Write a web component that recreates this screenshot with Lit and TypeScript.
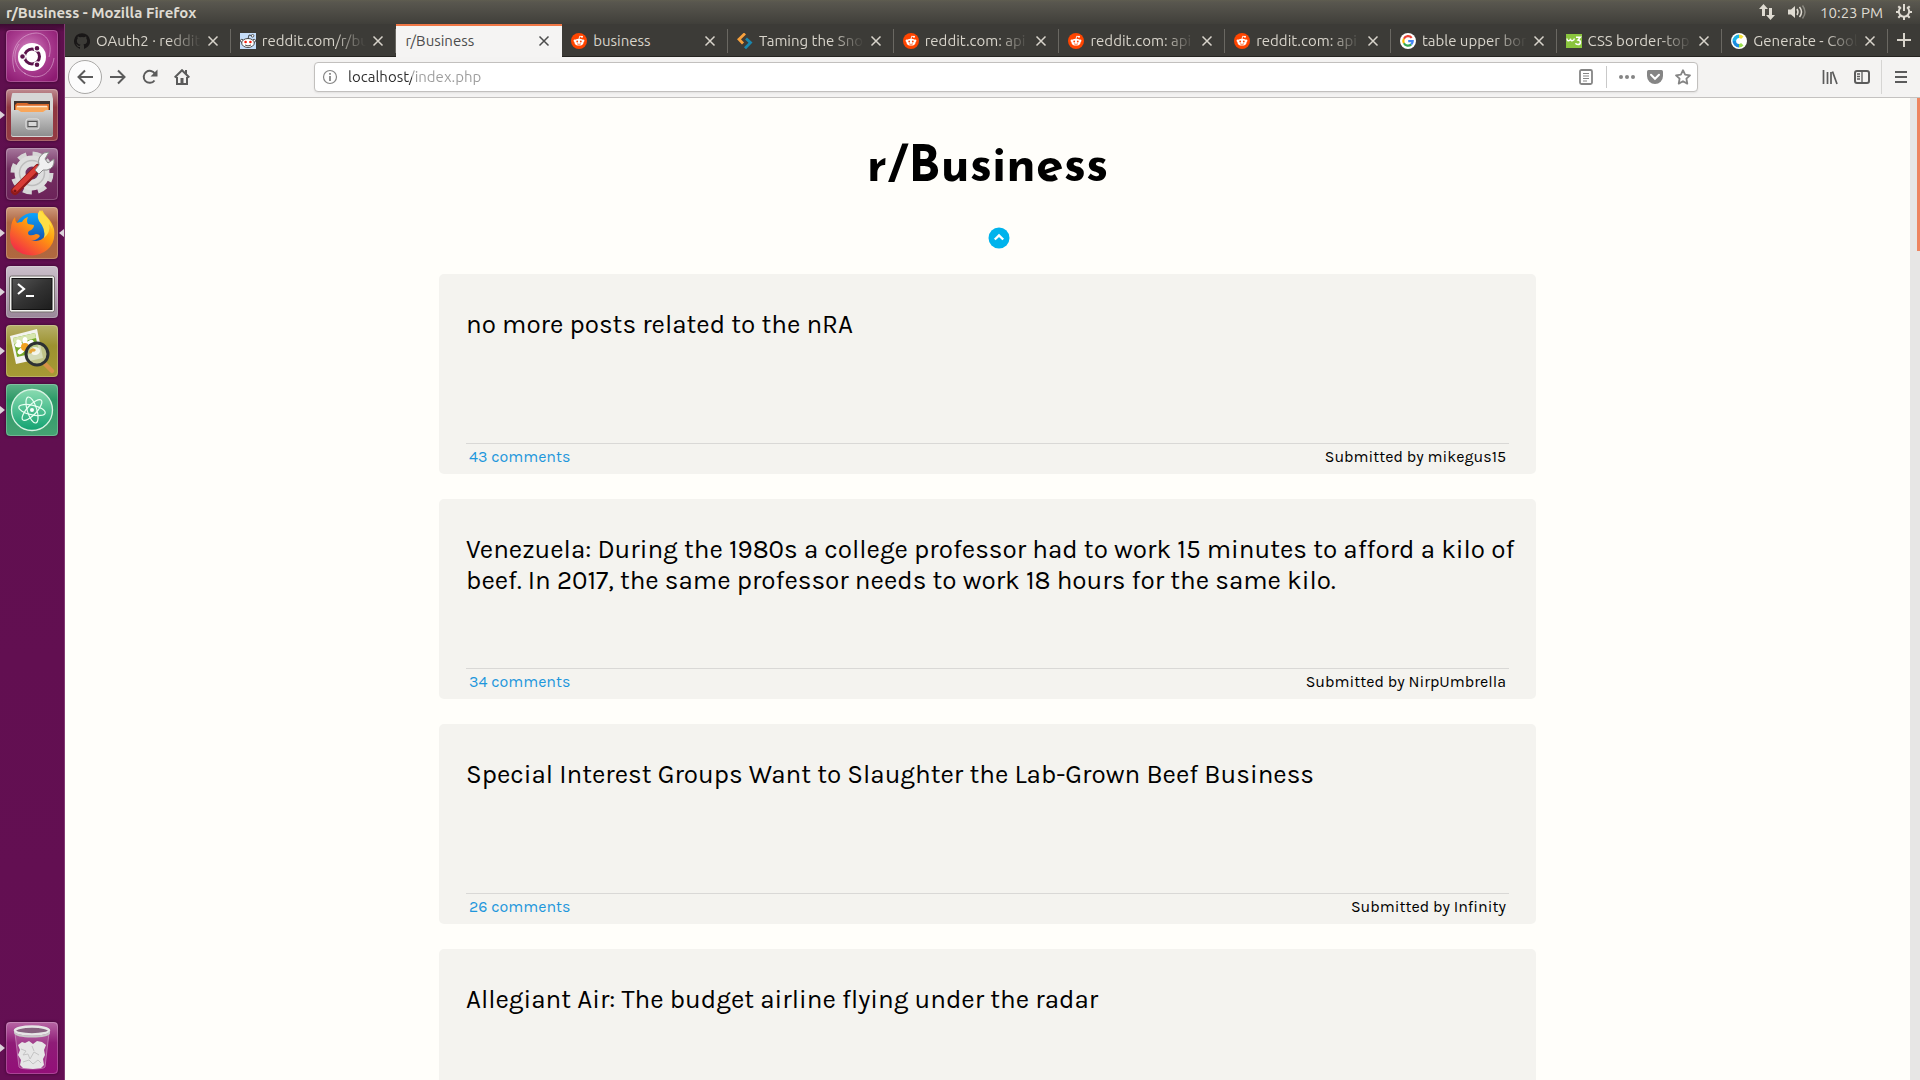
import { LitElement, html, css, svg, nothing, type TemplateResult } from "lit";
import { customElement, property } from "lit/decorators.js";
import { classMap } from "lit/directives/class-map.js";

interface Tab {
  title: string;
  icon?: string;
  active?: boolean;
  faded?: boolean;
}

interface Post {
  title: string;
  comments?: number;
  author?: string;
}

const tabs: Tab[] = [
  { title: "OAuth2 · reddit", icon: "github", faded: true },
  { title: "reddit.com/r/bu", icon: "snoo", faded: true },
  { title: "r/Business", active: true },
  { title: "business", icon: "reddit" },
  { title: "Taming the Sno", icon: "angles", faded: true },
  { title: "reddit.com: api", icon: "reddit", faded: true },
  { title: "reddit.com: api", icon: "reddit", faded: true },
  { title: "reddit.com: api", icon: "reddit", faded: true },
  { title: "table upper bor", icon: "google", faded: true },
  { title: "CSS border-top", icon: "w3", faded: true },
  { title: "Generate - Cool", icon: "coolors", faded: true },
];

const posts: Post[] = [
  { title: "no more posts related to the nRA", comments: 43, author: "mikegus15" },
  {
    title:
      "Venezuela: During the 1980s a college professor had to work 15 minutes to afford a kilo of beef. In 2017, the same professor needs to work 18 hours for the same kilo.",
    comments: 34,
    author: "NirpUmbrella",
  },
  {
    title: "Special Interest Groups Want to Slaughter the Lab-Grown Beef Business",
    comments: 26,
    author: "Infinity",
  },
  { title: "Allegiant Air: The budget airline flying under the radar" },
];

const favicons: Record<string, TemplateResult> = {
  github: svg`<path fill="#191717" d="M8 .2a8 8 0 0 0-2.5 15.6c.4.1.5-.2.5-.4v-1.5c-2.2.5-2.7-1-2.7-1-.4-.9-.9-1.200-.9-1.200-.7-.5.1-.5.1-.5.8.1 1.200.8 1.200.8.7 1.200 1.900.9 2.300.7.1-.5.3-.9.5-1.100-1.800-.2-3.600-.9-3.600-4 0-.9.3-1.600.8-2.100-.1-.2-.4-1 .1-2.100 0 0 .7-.2 2.200.8a7.500 7.500 0 0 1 4 0c1.500-1 2.200-.8 2.200-.8.4 1.100.1 1.900.1 2.100.5.6.8 1.300.8 2.100 0 3.100-1.900 3.700-3.700 3.900.3.300.6.8.6 1.500v2.400c0 .2.1.5.600.4A8 8 0 0 0 8 .2z"/>`,
  snoo: svg`<rect width="16" height="16" fill="#c6defa"/><path d="M8 6l1-4 3 .6" fill="none" stroke="#222" stroke-width=".8"/><circle cx="12.600" cy="2.800" r="1.300" fill="#fff" stroke="#222" stroke-width=".7"/><circle cx="1.900" cy="7.800" r="1.500" fill="#fff" stroke="#222" stroke-width=".7"/><circle cx="14.100" cy="7.800" r="1.500" fill="#fff" stroke="#222" stroke-width=".7"/><ellipse cx="8" cy="10" rx="6.300" ry="4.500" fill="#fff" stroke="#222" stroke-width=".8"/><circle cx="5.600" cy="9" r="1.300" fill="#f31c0c"/><circle cx="10.400" cy="9" r="1.300" fill="#f31c0c"/><path d="M5 12q3 1.800 6 0" fill="none" stroke="#222" stroke-width=".8"/>`,
  reddit: svg`<circle cx="8" cy="8" r="8" fill="#ff4500"/><path d="M8 6l.7-2.800 2.300.500" fill="none" stroke="#fff" stroke-width=".9"/><circle cx="11" cy="3.800" r="1" fill="#fff"/><circle cx="3.800" cy="7.700" r="1.200" fill="#fff"/><circle cx="12.200" cy="7.700" r="1.200" fill="#fff"/><ellipse cx="8" cy="9.200" rx="4.500" ry="3.400" fill="#fff"/><circle cx="6.200" cy="8.500" r=".9" fill="#ff4500"/><circle cx="9.800" cy="8.500" r=".9" fill="#ff4500"/><path d="M6 10.800q2 1.200 4 0" fill="none" stroke="#ff4500" stroke-width=".7"/>`,
  angles: svg`<path d="M8 .5L2 6.300 6 10.500" fill="none" stroke="#f8a13c" stroke-width="2.800"/><path d="M9 5.500L13.500 9.600 8 15.300" fill="none" stroke="#1a87ae" stroke-width="2.800"/>`,
  google: svg`<circle cx="8" cy="8" r="8" fill="#fff"/><g fill="none" stroke-width="2.200"><path d="M11.700 4.900A4.700 4.700 0 0 0 3.900 5.700" stroke="#ea4335"/><path d="M3.900 5.700a4.700 4.700 0 0 0 0 4.600" stroke="#fbbc05"/><path d="M3.900 10.300a4.700 4.700 0 0 0 7.300 1.100" stroke="#34a853"/><path d="M11.200 11.400A4.700 4.700 0 0 0 12.700 8.100H8.200" stroke="#4285f4"/></g>`,
  w3: svg`<rect y="1" width="16" height="14" fill="#8ac53e"/><path d="M1 5.500q.2 2.800 2.200 2.200 1.500-.5 1.200-2 .5 2.600 2.200 2 1.700-.5 1.700-2.200" fill="none" stroke="#fff" stroke-width="1.400"/><path d="M10 4.200h4.300L12 7c3.500.3 3 4.500 0 4.500q-2 0-2.500-1.300" fill="none" stroke="#fff" stroke-width="1.500"/>`,
  coolors: svg`<circle cx="8" cy="8" r="8" fill="#fff"/><g fill="none" stroke-width="3.600"><path d="M8 3.300a4.700 4.700 0 0 1 3.300 1.400" stroke="#f5e23c"/><path d="M8 3.300A4.700 4.700 0 0 0 3.300 8" stroke="#1fb5e9"/><path d="M3.300 8A4.700 4.700 0 0 0 8 12.700" stroke="#1b8de0"/><path d="M8 12.700a4.700 4.700 0 0 0 3.300-1.400" stroke="#9be04d"/></g>`,
};

const launcherArt: Record<string, TemplateResult> = {
  ubuntu: svg`<defs><radialGradient id="u" cx=".45" cy=".4" r=".7"><stop offset="0" stop-color="#d68bc4"/><stop offset=".55" stop-color="#a83b8e"/><stop offset="1" stop-color="#8d1b72"/></radialGradient></defs><rect width="52" height="52" rx="4" fill="url(#u)"/><g fill="none" stroke="#e3b4d8" stroke-opacity=".6"><path d="M9 42C2 22 12 4 30 3c10 0 17 10 13 24"/><path d="M20 44C8 38 6 24 13 14"/><path d="M18 43c14 9 28 1 30-15"/></g><circle cx="26" cy="27" r="14" fill="#fff"/><circle cx="26" cy="26.500" r="7.500" fill="none" stroke="#5b134b" stroke-width="3"/><g fill="#5b134b" stroke="#fff" stroke-width="1.200"><circle cx="16.500" cy="26.500" r="2.900"/><circle cx="31" cy="18.300" r="2.900"/><circle cx="31" cy="34.700" r="2.900"/></g>`,
  files: svg`<defs><linearGradient id="t" x2="0" y2="1"><stop offset="0" stop-color="#c08d92"/><stop offset=".35" stop-color="#8f3640"/><stop offset="1" stop-color="#943b43"/></linearGradient><linearGradient id="f" x2="0" y2="1"><stop offset="0" stop-color="#d0d0d0"/><stop offset="1" stop-color="#8e8e8e"/></linearGradient></defs><rect width="52" height="52" rx="4" fill="url(#t)"/><path d="M6 5q0-1 1-1h38q1 0 1 1l1 5v36q0 2-2 2H7q-2 0-2-2V10z" fill="#d6d6d6"/><path d="M8 12h36v12H8z" fill="#3f3330"/><path d="M9 16l2-2h10l2 1h20v9H9z" fill="#d9682a"/><path d="M10 17h32v7H10z" fill="#f9a65a"/><path d="M11 17.500h30" stroke="#ffe7cf" stroke-width="1.500"/><path d="M7 21h5l3 2h22l3-2h5q2 0 2 2v22q0 2-2 2H7q-2 0-2-2V23q0-2 2-2z" fill="url(#f)"/><rect x="20" y="30" width="13" height="10" rx="2" fill="#a9a9a9" stroke="#e6e6e6"/><rect x="22" y="32.500" width="9" height="5" fill="#d8d8d8" stroke="#555"/>`,
  settings: svg`<defs><linearGradient id="s" x2="0" y2="1"><stop offset="0" stop-color="#a7789d"/><stop offset=".4" stop-color="#733061"/><stop offset="1" stop-color="#6c2259"/></linearGradient></defs><rect width="52" height="52" rx="4" fill="url(#s)"/><circle cx="26" cy="25" r="18.500" fill="none" stroke="#d6d6d6" stroke-width="6" stroke-dasharray="8.500 6.030"/><circle cx="26" cy="25" r="12" fill="none" stroke="#dedede" stroke-width="11"/><circle cx="26" cy="25" r="12.500" fill="none" stroke="#bdbdbd" stroke-width="1.500"/><path d="M9 43L32 20" stroke="#8f1a1a" stroke-width="8" stroke-linecap="round"/><path d="M9 42L31 20" stroke="#d83c36" stroke-width="5" stroke-linecap="round"/><path d="M29 22l4-5q-2-8 5-12l5-1-4 7 3 4 6-4q1 9-7 11l-4 0-4 4z" fill="#f0f0f0" stroke="#8c8c8c"/><circle cx="9" cy="43" r="1.600" fill="#7a1414"/>`,
  firefox: svg`<defs><linearGradient id="x" x2="0" y2="1"><stop offset="0" stop-color="#cf9b7c"/><stop offset=".3" stop-color="#ad6542"/><stop offset="1" stop-color="#b0683f"/></linearGradient><linearGradient id="y" x1=".9" y1="0" x2=".2" y2="1"><stop offset="0" stop-color="#ffe93b"/><stop offset=".45" stop-color="#ff980e"/><stop offset="1" stop-color="#f2254b"/></linearGradient><linearGradient id="z" x2="0" y2="1"><stop offset="0" stop-color="#0aa5ff"/><stop offset="1" stop-color="#1a3a98"/></linearGradient></defs><rect width="52" height="52" rx="4" fill="url(#x)"/><circle cx="27" cy="24" r="18" fill="url(#z)"/><path d="M9 10q0 4 2 6 2-1 5-1 2-4 6-5-2 4 0 7l6 1q0 4-5 6-2 2 0 4 3 1 7-1 3 0 4 2-3 5-9 4 9 3 14-4 3-6-1-11-4-5-5-8 1-5 3-7 2 4 5 7 5 5 7 12 2 14-7 21-9 7-19 5Q9 46 5 36 3 27 5 21q0-6 4-11z" fill="url(#y)"/><path d="M34 3q-4 5-1 11 7 8 5 17 7-6 5-14 2 2 3 5-1-9-8-14-3-3-4-5z" fill="#ffde45"/>`,
  terminal: svg`<defs><linearGradient id="m" x2="0" y2="1"><stop offset="0" stop-color="#cbbfca"/><stop offset="1" stop-color="#9a8799"/></linearGradient><linearGradient id="n" x2="1" y2="1"><stop offset="0" stop-color="#555"/><stop offset=".5" stop-color="#333"/><stop offset="1" stop-color="#1d1d1d"/></linearGradient></defs><rect width="52" height="52" rx="4" fill="url(#m)"/><rect x="3.500" y="10" width="45" height="36" rx="2" fill="#f1f1ee" stroke="#77706f"/><rect x="6" y="12.500" width="40" height="31" fill="url(#n)" stroke="#111"/><path d="M12 18l6 5-6 5M20 30h8" fill="none" stroke="#fff" stroke-width="2.200"/>`,
  viewer: svg`<defs><linearGradient id="i" x2="0" y2="1"><stop offset="0" stop-color="#b7b06a"/><stop offset=".4" stop-color="#9c922f"/><stop offset="1" stop-color="#a79a35"/></linearGradient></defs><rect width="52" height="52" rx="4" fill="url(#i)"/><path d="M4 11L31 4l6 29-27 6z" fill="#f3f3ee"/><path d="M7 13l22-5 4 19-22 5z" fill="#76a829"/><path d="M7 13l22-5 1 5-22 6z" fill="#d7e6ae"/><g fill="#fff"><ellipse cx="19" cy="16" rx="2.500" ry="4"/><ellipse cx="13" cy="20" rx="4" ry="2.500"/><ellipse cx="15" cy="26" rx="4" ry="2.500" transform="rotate(-40 15 26)"/><ellipse cx="24" cy="18" rx="4" ry="2.500" transform="rotate(-30 24 18)"/><ellipse cx="13" cy="17" rx="3" ry="2" transform="rotate(35 13 17)"/></g><circle cx="19" cy="22" r="4" fill="#f1a322"/><path d="M38 38l8 8" stroke="#d69148" stroke-width="4.500" stroke-linecap="round"/><circle cx="31" cy="29" r="11" fill="#c9d3a6" fill-opacity=".75" stroke="#2d3133" stroke-width="3"/><ellipse cx="29" cy="26" rx="5" ry="4" fill="#fff" fill-opacity=".8"/><path d="M24 28q2-5 5-2" stroke="#e5a63a" stroke-width="3" fill="none"/>`,
  atom: svg`<defs><linearGradient id="a" x2="0" y2="1"><stop offset="0" stop-color="#5eb087"/><stop offset=".3" stop-color="#2d9a68"/><stop offset="1" stop-color="#46a273"/></linearGradient><linearGradient id="b" x2="0" y2="1"><stop offset="0" stop-color="#8adbb0"/><stop offset="1" stop-color="#12a271"/></linearGradient></defs><rect width="52" height="52" rx="4" fill="url(#a)"/><circle cx="26" cy="26" r="20.500" fill="url(#b)" stroke="#d8f3e3" stroke-width="1.300"/><g fill="none" stroke="#e9fff2" stroke-width="1.200"><ellipse cx="26" cy="26" rx="13.500" ry="4.800" transform="rotate(13 26 26)"/><ellipse cx="26" cy="26" rx="13.500" ry="4.800" transform="rotate(73 26 26)"/><ellipse cx="26" cy="26" rx="13.500" ry="4.800" transform="rotate(-47 26 26)"/></g><circle cx="26" cy="26" r="2" fill="#fff"/>`,
  trash: svg`<defs><linearGradient id="r" x2="0" y2="1"><stop offset="0" stop-color="#b766a4"/><stop offset=".4" stop-color="#8f1c77"/><stop offset="1" stop-color="#930f78"/></linearGradient></defs><rect width="52" height="52" rx="4" fill="url(#r)"/><path d="M9 11h34l-4 34q-1 2-13 2t-13-2z" fill="#e9c7e1" fill-opacity=".2" stroke="#e0b9d7" stroke-opacity=".5"/><path d="M12 23l4-3 3 1 4-2 4 3 4-3 5 1 4 3-2 5 1 5-2 4 1 6-3 3-8 1-10-1-3-3 1-5-3-5 2-5z" fill="#e6e6e6"/><path d="M15 27l5 2-3 4 5-1 2 5 4-7 5 3M17 40l6-2 4 4 5-4 3 3M26 24l2 5" fill="none" stroke="#c4c4c4"/><ellipse cx="26" cy="8.500" rx="17" ry="4" fill="#86627f" stroke="#e6e6e6" stroke-width="2.500"/><path d="M8 8.500q1 5 18 5t18-5v3q-2 4-18 4T8 11z" fill="#c9c9c9"/>`,
};

@customElement("launcher-item")
export class LauncherItem extends LitElement {
  @property() name = "";
  @property() label = "";
  @property({ type: Boolean }) running = false;
  @property({ type: Boolean }) focused = false;

  static styles = css`
    :host {
      display: flex;
      align-items: center;
      justify-content: space-between;
      height: 52px;
    }
    .mark {
      width: 5px;
      height: 10px;
      fill: #dcd3da;
      visibility: hidden;
    }
    .on {
      visibility: visible;
    }
    button {
      width: 52px;
      height: 52px;
      padding: 0;
      border: 0;
      background: none;
      border-radius: 4px;
      box-shadow: 0 0 3px rgba(30, 0, 25, 0.7);
    }
    .art {
      display: block;
      width: 52px;
      height: 52px;
    }
    .edge {
      fill: none;
      stroke: #fff;
      stroke-opacity: 0.22;
    }
  `;

  render() {
    return html`
      <svg class=${classMap({ mark: true, on: this.running })} viewBox="0 0 5 10"><path d="M0 1l5 4-5 4z" /></svg>
      <button aria-label=${this.label}>
        <svg class="art" viewBox="0 0 52 52">
          ${launcherArt[this.name]}
          <rect class="edge" x=".5" y=".5" width="51" height="51" rx="4" />
        </svg>
      </button>
      <svg class=${classMap({ mark: true, on: this.focused })} viewBox="0 0 5 10"><path d="M5 1L0 5l5 4z" /></svg>
    `;
  }
}

@customElement("browser-tab")
export class BrowserTab extends LitElement {
  @property({ attribute: false }) tab!: Tab;

  static styles = css`
    :host {
      display: block;
      flex: 1 1 0;
      min-width: 0;
    }
    .tab {
      box-sizing: border-box;
      display: flex;
      align-items: center;
      gap: 6px;
      height: 33px;
      padding: 2px 12px 0 9px;
      color: #d8d4cb;
      border-bottom: 1px solid #252420;
      background: linear-gradient(#6a6862, #6a6862) right 5px / 1px 24px no-repeat;
    }
    .active {
      color: #4c4c4c;
      background: #f5f4f3;
      border-top: 2px solid #f07746;
      border-bottom: 0;
      padding-top: 0;
      padding-bottom: 1px;
    }
    .icon {
      flex: none;
      width: 16px;
      height: 16px;
    }
    .label {
      flex: 1;
      min-width: 0;
      white-space: nowrap;
      line-height: 20px;
    }
    .faded {
      mask-image: linear-gradient(to left, transparent, #000 32px);
    }
    button {
      flex: none;
      width: 12px;
      height: 12px;
      padding: 0;
      border: 0;
      color: inherit;
      background: none;
    }
    .close {
      display: block;
      fill: none;
      stroke: currentColor;
      stroke-width: 1.500;
    }
  `;

  render() {
    const { title, icon, active, faded } = this.tab;
    return html`
      <div class=${classMap({ tab: true, active: !!active })}>
        ${icon ? html`<svg class="icon" viewBox="0 0 16 16">${favicons[icon]}</svg>` : nothing}
        <span class=${classMap({ label: true, faded: !!faded })}>${title}</span>
        <button aria-label="Close tab">
          <svg class="close" viewBox="0 0 12 12"><path d="M1.500 1.500l9 9m0-9l-9 9" /></svg>
        </button>
      </div>
    `;
  }
}

@customElement("post-card")
export class PostCard extends LitElement {
  @property({ attribute: false }) post!: Post;

  static styles = css`
    :host {
      display: block;
    }
    .card {
      box-sizing: border-box;
      display: flex;
      flex-direction: column;
      min-height: 200px;
      padding: 35px 0 4px 27px;
      border-radius: 5px;
      background: #f4f3ef;
    }
    .title {
      flex: 1;
      margin: 0;
      padding-right: 8px;
      font-size: 26px;
      line-height: 31px;
      font-weight: 400;
    }
    .meta {
      display: flex;
      justify-content: space-between;
      margin-right: 27px;
      padding: 0 3px;
      border-top: 1px solid #d9d8d6;
      font-size: 16px;
      line-height: 26px;
    }
    a {
      color: #1e97dc;
      text-decoration: none;
    }
  `;

  render() {
    const { title, comments, author } = this.post;
    return html`
      <article class="card">
        <h2 class="title">${title}</h2>
        ${author
          ? html`<div class="meta"><a href="#comments">${comments} comments</a><span>Submitted by ${author}</span></div>`
          : nothing}
      </article>
    `;
  }
}

@customElement("app-root")
export class AppRoot extends LitElement {
  static styles = css`
    :host {
      display: flex;
      flex-direction: column;
      height: 100vh;
      overflow: hidden;
      font-family: Ubuntu, "Open Sans", "Noto Sans", sans-serif;
      font-size: 15px;
    }
    button {
      padding: 0;
      border: 0;
      background: none;
      color: inherit;
    }
    svg {
      display: block;
    }
    .panel {
      flex: none;
      display: flex;
      align-items: center;
      justify-content: space-between;
      height: 24px;
      padding: 0 7px 0 6px;
      color: #dfdbd2;
      background: linear-gradient(#5f5d50, #59574f 2px, #403f3a);
    }
    .window-title {
      font-weight: 700;
    }
    .status {
      display: flex;
      align-items: center;
      gap: 12px;
    }
    .body {
      flex: 1;
      min-height: 0;
      display: flex;
    }
    .launcher {
      flex: none;
      box-sizing: border-box;
      width: 65px;
      display: flex;
      flex-direction: column;
      gap: 7px;
      padding: 6px 0;
      border-right: 1px solid #833b73;
      background: linear-gradient(#3c0a31, #5f0f4e 8px, #640f53);
    }
    .bottom {
      margin-top: auto;
    }
    .browser {
      flex: 1;
      min-width: 0;
      display: flex;
      flex-direction: column;
    }
    .tabs {
      flex: none;
      display: flex;
      background: #3c3b37;
    }
    .new-tab {
      width: 32px;
      height: 33px;
      display: grid;
      place-items: center;
      color: #d8d4cb;
      border-bottom: 1px solid #252420;
    }
    .toolbar {
      flex: none;
      box-sizing: border-box;
      display: flex;
      align-items: center;
      height: 41px;
      padding: 0 3px;
      color: #5b5b5b;
      background: #f4f3f2;
      border-bottom: 1px solid #c4c2c0;
    }
    .tool {
      flex: none;
      width: 32px;
      height: 32px;
      display: grid;
      place-items: center;
    }
    .back {
      box-sizing: border-box;
      width: 34px;
      height: 34px;
      border: 1px solid #a9a8a6;
      border-radius: 50%;
      background: #fcfcfc;
    }
    .spacer {
      flex: 117 1 0;
    }
    .url {
      box-sizing: border-box;
      flex: 1382 1 0;
      display: flex;
      align-items: center;
      gap: 10px;
      height: 30px;
      padding: 0 4px 0 7px;
      border: 1px solid #c2c0be;
      border-radius: 4px;
      background: #fff;
      color: #858585;
      box-shadow: 0 1px 2px rgba(0, 0, 0, 0.08);
    }
    .address {
      flex: 1;
      min-width: 0;
      padding: 0;
      border: 0;
      outline: 0;
      font: inherit;
      line-height: 20px;
      color: transparent;
      /* Host in dark ink, path in grey. */
      background: linear-gradient(to right, #2b2b2b 64px, #9b9b9b 64px);
      background-clip: text;
    }
    .rule {
      width: 1px;
      height: 22px;
      margin-left: 2px;
      background: #c9c9c9;
    }
    .divider {
      width: 1px;
      height: 34px;
      margin: 0 3px;
      background: #d6d5d3;
    }
    .viewport {
      flex: 1;
      min-height: 0;
      display: flex;
      background: #fffefa;
    }
    .page {
      flex: 1;
      min-width: 0;
      overflow: hidden;
      color: #000;
      font-family: Karla, Inter, "Liberation Sans", sans-serif;
    }
    .heading {
      margin: 0;
      padding-top: 39px;
      text-align: center;
      font-family: "Josefin Sans", Lato, sans-serif;
      font-size: 50px;
      line-height: 64px;
      font-weight: 700;
    }
    .up-row {
      display: flex;
      justify-content: center;
      padding: 26px 0 25px 22px;
    }
    .feed {
      display: flex;
      flex-direction: column;
      gap: 25px;
      max-width: 1097px;
      margin: 0 auto;
    }
    .track {
      flex: none;
      width: 10px;
      display: flex;
      justify-content: flex-end;
      background: #e7e6e5;
    }
    .thumb {
      width: 3px;
      height: 153px;
      background: #ee8560;
    }
    .line {
      fill: none;
      stroke: currentColor;
      stroke-width: 2;
    }
  `;

  render() {
    return html`
      <header class="panel">
        <span class="window-title">r/Business - Mozilla Firefox</span>
        <div class="status">
          <svg width="18" height="18" viewBox="0 0 18 18" fill="#dfdbd2">
            <path d="M5.500 1L10 6H7v7H4V6H1zM12.500 17L8 12h3V5h3v7h3z" />
          </svg>
          <svg width="20" height="16" viewBox="0 0 20 16">
            <path d="M0 5.500h3L7 2v12l-4-3.500H0z" fill="#dfdbd2" />
            <g fill="none" stroke="#dfdbd2" stroke-width="1.500">
              <path d="M9 5q2 3 0 6" />
              <path d="M11.500 3q4 5 0 10" />
              <path d="M14.500 1.500q5 6.500 0 13" opacity=".4" />
            </g>
          </svg>
          <span>10:23 PM</span>
          <svg width="18" height="18" viewBox="0 0 18 18" fill="none" stroke="#dfdbd2" stroke-width="2">
            <path d="M6 4.300a5.200 5.200 0 1 0 6 0M9 1v7" />
            <path d="M1 9h3m10 0h3M9 14v3M3.300 14.700l2-2m9.400 2l-2-2M3.300 3.300l2 2m9.400-2l-2 2" />
          </svg>
        </div>
      </header>
      <div class="body">
        <nav class="launcher">
          <launcher-item name="ubuntu" label="Search"></launcher-item>
          <launcher-item name="files" label="Files" running></launcher-item>
          <launcher-item name="settings" label="System Settings"></launcher-item>
          <launcher-item name="firefox" label="Firefox" running focused></launcher-item>
          <launcher-item name="terminal" label="Terminal" running></launcher-item>
          <launcher-item name="viewer" label="Image Viewer" running></launcher-item>
          <launcher-item name="atom" label="Atom" running></launcher-item>
          <launcher-item class="bottom" name="trash" label="Trash" running></launcher-item>
        </nav>
        <div class="browser">
          <div class="tabs">
            ${tabs.map((tab) => html`<browser-tab .tab=${tab}></browser-tab>`)}
            <button class="new-tab" aria-label="New tab">
              <svg class="line" width="14" height="14" viewBox="0 0 14 14"><path d="M7 0v14M0 7h14" /></svg>
            </button>
          </div>
          <div class="toolbar">
            <button class="tool back" aria-label="Back">
              <svg class="line" width="16" height="16" viewBox="0 0 16 16"><path d="M16 8H1.500M8 1.500L1.500 8 8 14.500" /></svg>
            </button>
            <button class="tool" aria-label="Forward">
              <svg class="line" width="16" height="16" viewBox="0 0 16 16"><path d="M0 8h14.500M8 1.500L14.500 8 8 14.500" /></svg>
            </button>
            <button class="tool" aria-label="Reload">
              <svg class="line" width="16" height="16" viewBox="0 0 16 16">
                <path d="M12.500 11.500A6 6 0 1 1 13 5" />
                <path d="M15.500 .500v7h-7z" fill="currentColor" stroke="none" />
              </svg>
            </button>
            <button class="tool" aria-label="Home">
              <svg class="line" width="16" height="16" viewBox="0 0 16 16">
                <path d="M.700 8.500L8 1.200l7.300 7.300M3 8v7h10V8" />
                <path d="M6.500 15V9h3v6zM11 1h2v4h-2z" fill="currentColor" stroke="none" />
              </svg>
            </button>
            <div class="spacer"></div>
            <div class="url">
              <svg width="16" height="16" viewBox="0 0 16 16" fill="none" stroke="currentColor">
                <circle cx="8" cy="8" r="6.500" stroke-width="1.200" />
                <path d="M8 7v5M8 4v1.800" stroke-width="1.800" />
              </svg>
              <input class="address" aria-label="Address" value="localhost/index.php" />
              <svg width="16" height="16" viewBox="0 0 16 16" fill="none" stroke="currentColor">
                <rect x="2" y="1" width="12" height="14" rx="1.500" stroke-width="1.800" />
                <path d="M5 4.500h6M5 7h6M5 9.500h6M5 12h4" />
              </svg>
              <div class="rule"></div>
              <svg width="20" height="16" viewBox="0 0 20 16" fill="currentColor">
                <circle cx="4" cy="8" r="2" /><circle cx="10" cy="8" r="2" /><circle cx="16" cy="8" r="2" />
              </svg>
              <svg width="16" height="16" viewBox="0 0 16 16">
                <path d="M1.500 1h13Q16 1 16 2.500V7a8 8 0 0 1-16 0V2.500Q0 1 1.500 1z" fill="currentColor" />
                <path d="M4 5.800l4 4 4-4" fill="none" stroke="#fff" stroke-width="2" stroke-linecap="round" />
              </svg>
              <svg width="20" height="16" viewBox="-2 0 20 16" fill="none" stroke="currentColor" stroke-width="1.800">
                <path d="M8 1.200l2.100 4.500 4.900.600-3.600 3.400.900 4.900L8 12.200l-4.300 2.400.9-4.900L1 6.300l4.900-.6z" stroke-linejoin="round" />
              </svg>
            </div>
            <div class="spacer"></div>
            <button class="tool" aria-label="Library">
              <svg class="line" width="16" height="16" viewBox="0 0 16 16"><path d="M1.500 1v14M5.500 3v12M9 3v12M10.500 2.500L15 15" stroke-width="1.700" /></svg>
            </button>
            <button class="tool" aria-label="Sidebars">
              <svg class="line" width="16" height="16" viewBox="0 0 16 16">
                <rect x="1" y="2" width="14" height="12" rx="2" />
                <path d="M8 2v12M3 5h3M3 7.500h3M3 10h3" stroke-width="1.300" />
              </svg>
            </button>
            <div class="divider"></div>
            <button class="tool" aria-label="Open menu">
              <svg class="line" width="14" height="14" viewBox="0 0 14 14"><path d="M1 2h12M1 7h12M1 12h12" /></svg>
            </button>
          </div>
          <div class="viewport">
            <main class="page">
              <h1 class="heading">r/Business</h1>
              <div class="up-row">
                <button aria-label="Back to top">
                  <svg width="22" height="22" viewBox="0 0 22 22">
                    <circle cx="11" cy="11" r="10.500" fill="#00b3ec" />
                    <path d="M6.800 12.500L11 8.500l4.200 4" fill="none" stroke="#fff" stroke-width="2.400" />
                  </svg>
                </button>
              </div>
              <section class="feed">${posts.map((post) => html`<post-card .post=${post}></post-card>`)}</section>
            </main>
            <div class="track"><div class="thumb"></div></div>
          </div>
        </div>
      </div>
    `;
  }
}
